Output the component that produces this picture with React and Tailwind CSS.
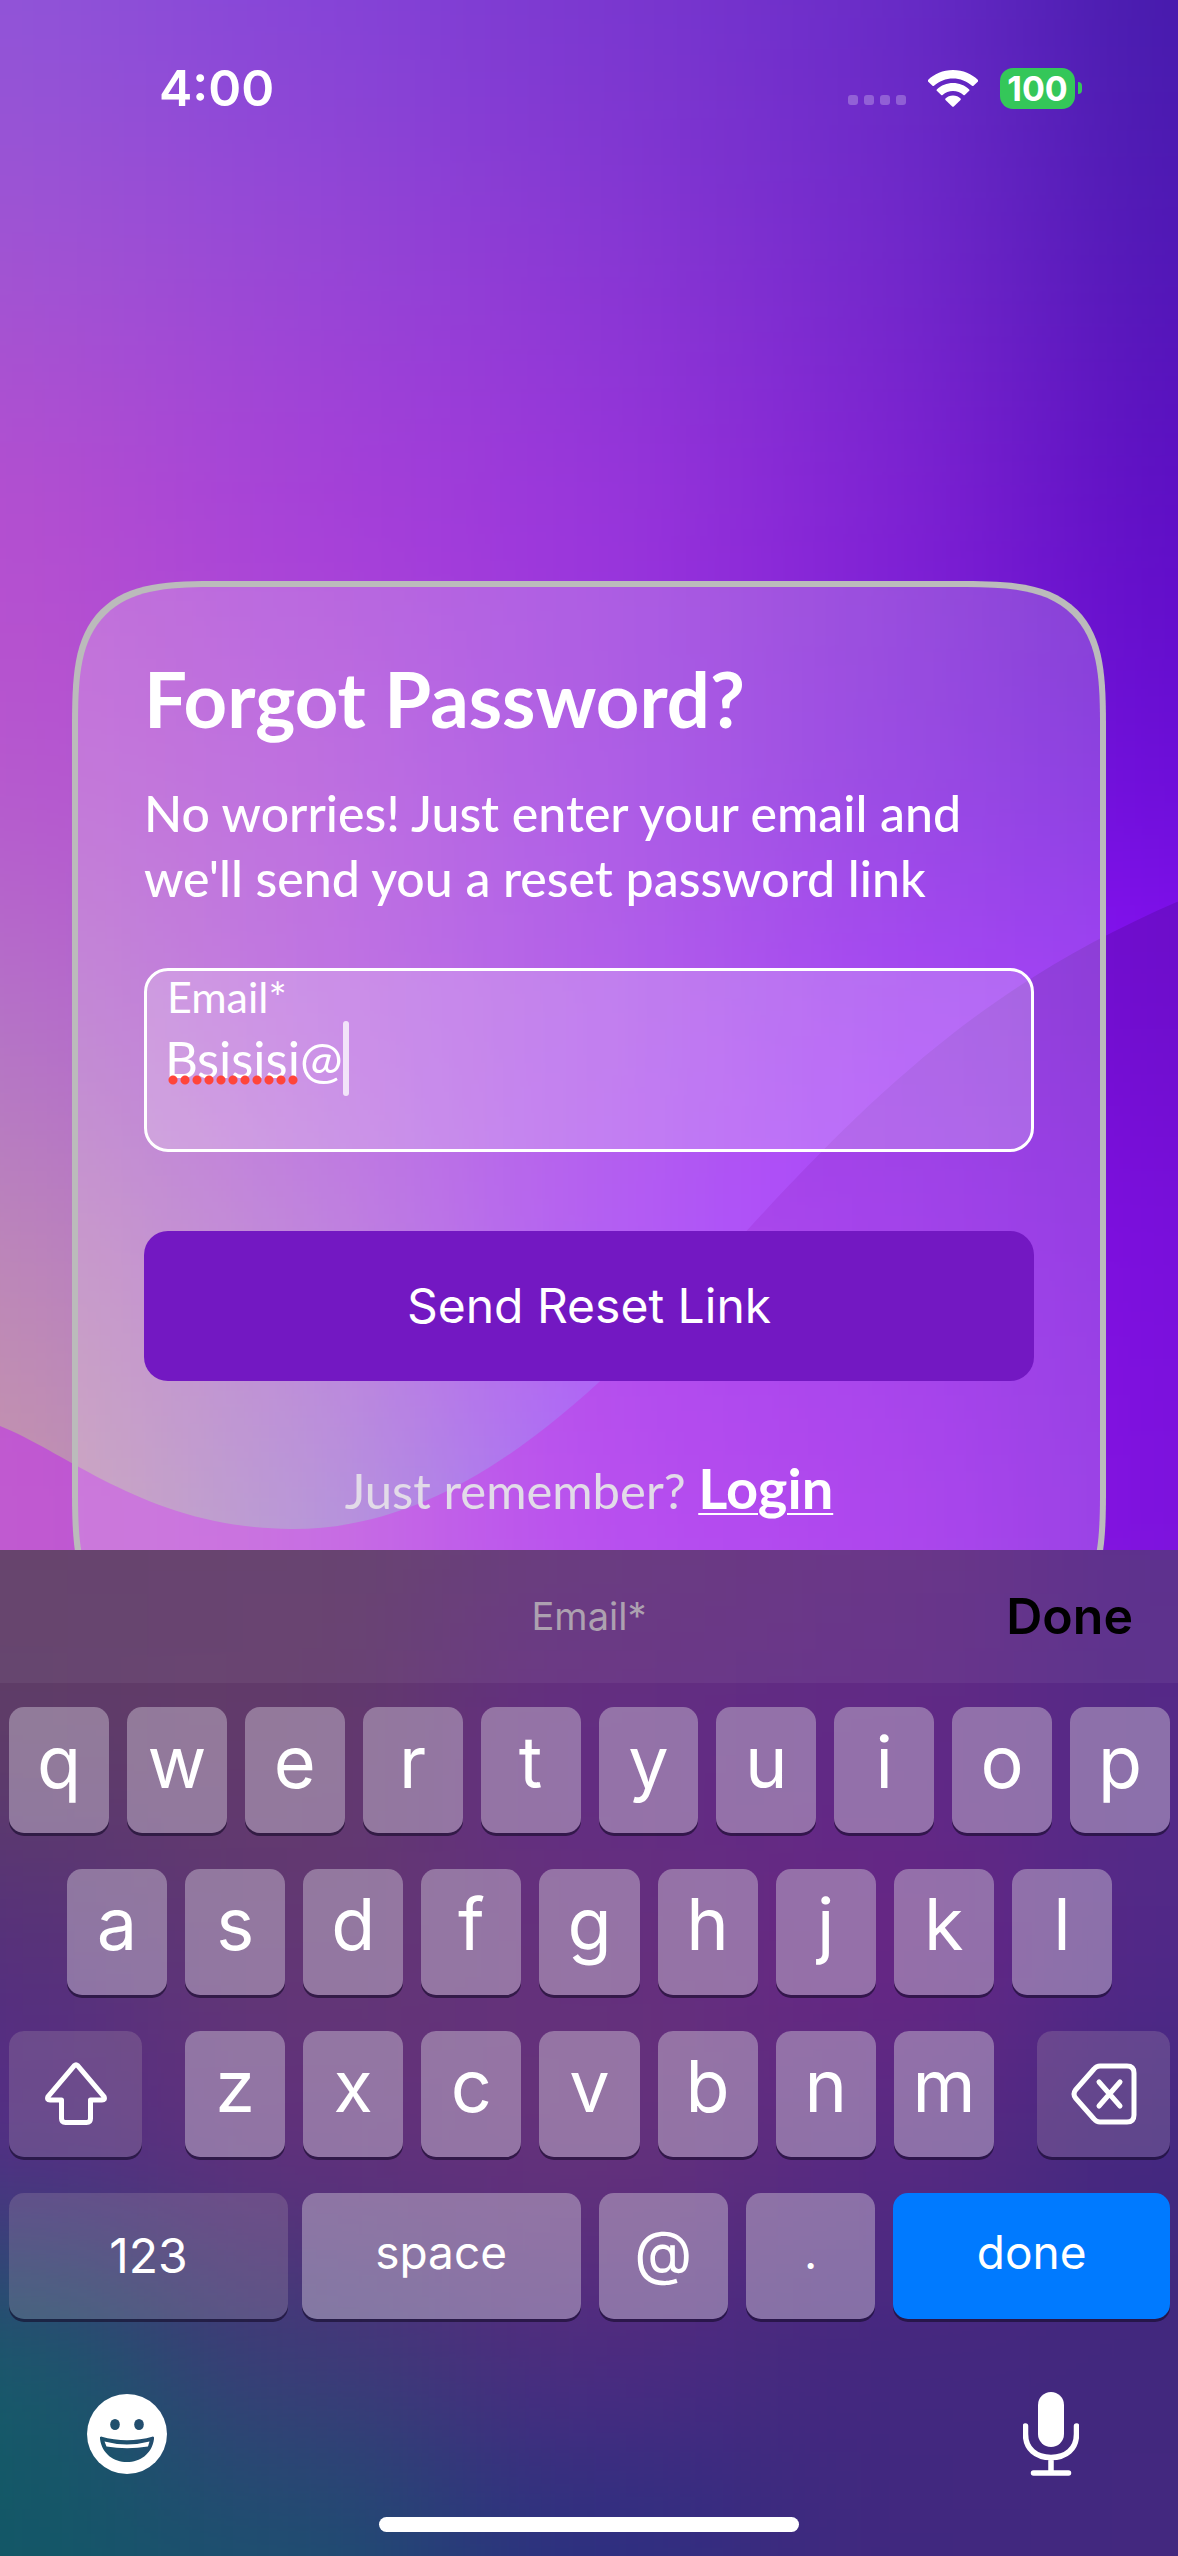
import React from "react";

const SKY = {
  xs: [0, 295, 589, 884, 1178],
  ys: [0, 260, 520, 780, 1040, 1300, 1560],
  colors: [
    ["#9055d8", "#8545d8", "#7a38d0", "#6a2cc8", "#431aaa"],
    ["#a155d2", "#9848d6", "#8a38d4", "#7429cc", "#4e16b4"],
    ["#b64fcf", "#a83fd8", "#9c36dc", "#8222d4", "#5c0cc4"],
    ["#b758ce", "#b14fd8", "#9c38e0", "#8020dc", "#6a0cd8"],
    ["#b478c4", "#b355dc", "#a23ae6", "#9418f4", "#8a10f8"],
    ["#bf8cb4", "#b270d0", "#a236f4", "#9718ff", "#9718ff"],
    ["#c898a8", "#a585cc", "#9050f8", "#9718ff", "#9718ff"],
  ],
};

const WAVE = {
  xs: [0, 295, 589, 884, 1178],
  ys: [960, 1250, 1540],
  colors: [
    ["#c055d0", "#c055dc", "#8a13dd", "#8213dc", "#6a0cc8"],
    ["#c055d0", "#b848e0", "#a020ea", "#8e14e8", "#780edc"],
    ["#c05ccf", "#be50da", "#a824ec", "#9c1aea", "#7a12dc"],
  ],
};

const BOARD = {
  xs: [0, 295, 589, 884, 1178],
  ys: [0, 200, 400, 600, 800, 1006],
  colors: [
    ["#5f3a65", "#603a68", "#623378", "#622c82", "#552588"],
    ["#5e3d68", "#623a6b", "#632c84", "#602986", "#542a86"],
    ["#55307c", "#623874", "#64307c", "#682684", "#502888"],
    ["#552c86", "#612f7c", "#66327a", "#582a82", "#42287f"],
    ["#175a6a", "#3d3a78", "#4e2a80", "#43287f", "#42287e"],
    ["#125766", "#1c4f70", "#2a3080", "#40287f", "#43287f"],
  ],
};

function Mesh({ mesh, blur }) {
  const { xs, ys, colors } = mesh;
  const edge = (list, i) => (i === 0 ? list[0] - 500 : (list[i - 1] + list[i]) / 2);
  const end = (list, i) =>
    i === list.length - 1 ? list[i] + 500 : (list[i] + list[i + 1]) / 2;
  return (
    <g filter={`url(#${blur})`}>
      {colors.map((row, r) =>
        row.map((color, c) => (
          <rect
            key={`${r}-${c}`}
            x={edge(xs, c)}
            y={edge(ys, r)}
            width={end(xs, c) - edge(xs, c) + 1}
            height={end(ys, r) - edge(ys, r) + 1}
            fill={color}
          />
        ))
      )}
    </g>
  );
}

function BlurFilter({ id, amount }) {
  return (
    <filter
      id={id}
      filterUnits="userSpaceOnUse"
      x="-500"
      y="-500"
      width="2200"
      height="2600"
      colorInterpolationFilters="sRGB"
    >
      <feGaussianBlur stdDeviation={amount} />
    </filter>
  );
}

function Wallpaper() {
  return (
    <svg
      aria-hidden="true"
      viewBox="0 0 1178 1551"
      preserveAspectRatio="none"
      className="absolute inset-0 h-full w-full"
    >
      <defs>
        <BlurFilter id="soft" amount="115" />
        <clipPath id="wave">
          <path d="M0 1427 C70 1455 150 1529 290 1530 C470 1532 610 1380 750 1228 C900 1064 1010 975 1178 902 V1600 H0 Z" />
        </clipPath>
      </defs>
      <Mesh mesh={SKY} blur="soft" />
      <g clipPath="url(#wave)">
        <Mesh mesh={WAVE} blur="soft" />
      </g>
    </svg>
  );
}

function StatusBar() {
  return (
    <header className="flex h-[176px] items-center justify-between pr-[96px] pl-[159px] font-[Inter,sans-serif]">
      <time className="text-[50px] leading-[60px] font-semibold">4:00</time>
      <div className="flex items-center">
        <div className="mt-6 flex gap-1.5">
          {[0, 1, 2, 3].map((i) => (
            <span key={i} className="size-2.5 rounded-[3px] bg-white/25" />
          ))}
        </div>
        <svg viewBox="0 0 50 37" className="ml-[22px] h-[37px] w-[50px]" fill="#fff" aria-label="Wi-Fi">
          <path d="M25 0 C35 0 44 4 50 10 Q50.500 10.700 50 11.400 L45.500 15.800 Q44.800 16.300 44 15.700 C39 11 32 8.400 25 8.400 C18 8.400 11 11 6 15.700 Q5.200 16.300 4.500 15.800 L0 11.400 Q-.5 10.700 0 10 C6 4 15 0 25 0 Z" />
          <path d="M25 13 C31 13 37 15.400 41.200 19.400 Q41.900 20.100 41.200 20.800 L36.800 25 Q36.100 25.500 35.400 24.900 C32.600 22.500 29 21.100 25 21.100 C21 21.100 17.400 22.500 14.600 24.900 Q13.900 25.500 13.200 25 L8.800 20.800 Q8.100 20.100 8.800 19.400 C13 15.400 19 13 25 13 Z" />
          <path d="M25 25.600 C28 25.600 30.600 26.700 32.500 28.500 Q33.100 29.200 32.500 29.900 L25.800 36.500 Q25 37.100 24.200 36.500 L17.500 29.900 Q16.900 29.200 17.500 28.500 C19.400 26.700 22 25.600 25 25.600 Z" />
        </svg>
        <div className="ml-[22px] flex h-[41px] w-[75px] items-center justify-center rounded-[13px] bg-[#34c759] text-[34px] leading-[41px] font-bold">
          100
        </div>
        <span className="ml-[3px] h-3 w-1 rounded-r-full bg-[#34c759]" />
      </div>
    </header>
  );
}

function ForgotPasswordCard() {
  return (
    <section className="mx-[72px] mt-[405px] h-[1056px] shrink-0 rounded-[110px] border-[6px] border-[#bbbbbb] bg-white/20 px-[66px] pt-16 font-[Lato,sans-serif] supports-[corner-shape:squircle]:rounded-[150px] supports-[corner-shape:squircle]:[corner-shape:superellipse(1.7)]">
      <h1 className="text-[76px] leading-[96px] font-bold">Forgot Password?</h1>
      <p className="mt-[34px] text-[50px] leading-[65px] font-medium">
        No worries! Just enter your email and
        <br />
        we'll send you a reset password link
      </p>
      <form onSubmit={(e) => e.preventDefault()}>
        <div className="mt-[57px] flex h-[184px] flex-col rounded-3xl border-[3px] border-white bg-white/20 px-[18px] pt-0.5">
          <label htmlFor="email" className="pl-0.5 text-[43px] leading-[48px]">
            Email*
          </label>
          <div className="relative flex">
            <input
              id="email"
              type="text"
              defaultValue="Bsisisi@"
              spellCheck={false}
              className="field-sizing-content h-[75px] bg-transparent text-[51px] leading-[75px] font-normal outline-none"
            />
            <span className="h-[75px] w-1.5 rounded-sm bg-white/75" />
            <span className="absolute top-[53px] left-0.5 h-3 w-[132px] bg-[radial-gradient(circle,#ff453a_4px,transparent_5px)] bg-size-[12px_12px]" />
          </div>
        </div>
        <button
          type="submit"
          className="mt-[79px] h-[150px] w-full rounded-3xl bg-[#7318c2] font-[Inter,sans-serif] text-[48px]"
        >
          Send Reset Link
        </button>
      </form>
      <p className="mt-[74px] text-center text-[49px] leading-[66px] text-[#e2dbe8]">
        Just remember?{" "}
        <a href="#login" className="text-[56px] font-bold text-white underline decoration-2 underline-offset-4">
          Login
        </a>
      </p>
    </section>
  );
}

function LetterKey({ children }) {
  return (
    <button
      type="button"
      className="flex h-[126px] min-w-0 flex-1 items-center justify-center rounded-[15px] bg-[#d0c8d8]/45 pb-4 text-[72px] leading-[90px] font-normal shadow-[0_3px_0_rgba(20,10,40,0.6)]"
    >
      {children}
    </button>
  );
}

function ShiftIcon() {
  return (
    <svg viewBox="0 0 64 64" className="size-16" fill="none" stroke="#fff" strokeWidth="5" strokeLinejoin="round" aria-hidden="true">
      <path d="M30.300 3.600 Q32 2 33.700 3.600 L60 34.600 Q61.500 38 58 38 H46.500 V56.500 Q46.500 60.500 42.500 60.500 H21.500 Q17.500 60.500 17.500 56.500 V38 H6 Q2.500 38 4 34.600 Z" />
    </svg>
  );
}

function DeleteIcon() {
  return (
    <svg viewBox="0 0 66 62" className="h-[62px] w-[66px]" fill="none" stroke="#fff" strokeWidth="5" strokeLinecap="round" strokeLinejoin="round" aria-hidden="true">
      <path d="M29 3 H56 Q63 3 63 10 V52 Q63 59 56 59 H29 Q25.500 59 23 56 L4.500 35 Q1.500 31 4.500 27 L23 6 Q25.500 3 29 3 Z" />
      <path d="M28 19 L49 43 M49 19 L28 43" />
    </svg>
  );
}

function EmojiIcon() {
  return (
    <svg viewBox="0 0 80 80" className="size-20" aria-hidden="true">
      <defs>
        <mask id="face">
          <rect width="80" height="80" fill="#fff" />
          <ellipse cx="28" cy="30.500" rx="4.800" ry="5.600" fill="#000" />
          <ellipse cx="52" cy="30.500" rx="4.800" ry="5.600" fill="#000" />
          <path d="M14 42.500 Q40 50 66 42.500 Q67.500 42.500 67 45 C65 60 53 68 40 68 C27 68 15 60 13 45 Q12.500 42.500 14 42.500 Z" fill="#000" />
          <path d="M17.500 47.500 Q40 53.500 62.500 47.500 L61 52.500 Q40 56 19.500 52.500 Z" fill="#fff" />
        </mask>
      </defs>
      <circle cx="40" cy="40" r="40" fill="#fff" mask="url(#face)" />
    </svg>
  );
}

function MicIcon() {
  return (
    <svg viewBox="0 0 56 86" className="h-[86px] w-14" aria-hidden="true">
      <rect x="15" y="1" width="26" height="55" rx="13" fill="#fff" />
      <path d="M2.500 35 V43 C2.500 58 13 66.500 28 66.500 C43 66.500 53.500 58 53.500 43 V35 M28 67 V81 M10.500 82 H45.500" fill="none" stroke="#fff" strokeWidth="5.500" strokeLinecap="round" />
    </svg>
  );
}

function Keyboard() {
  return (
    <section aria-label="Keyboard" className="relative shrink-0 overflow-hidden font-[Inter,sans-serif]">
      <svg aria-hidden="true" viewBox="0 0 1178 1006" preserveAspectRatio="none" className="absolute inset-0 h-full w-full">
        <defs>
          <BlurFilter id="haze" amount="85" />
        </defs>
        <Mesh mesh={BOARD} blur="haze" />
      </svg>
      <div className="relative">
        <div className="grid h-[133px] grid-cols-3 items-center bg-white/5 px-[45px]">
          <span />
          <span className="text-center text-[38px] text-[#ada1b0]">Email*</span>
          <button type="button" className="justify-self-end text-[50px] font-semibold text-black">
            Done
          </button>
        </div>
        <div className="flex flex-col gap-9 pt-6 pr-2 pl-[9px]">
          <div className="flex gap-[18px]">
            {[..."qwertyuiop"].map((k) => <LetterKey key={k}>{k}</LetterKey>)}
          </div>
          <div className="flex gap-[18px] px-[58px]">
            {[..."asdfghjkl"].map((k) => <LetterKey key={k}>{k}</LetterKey>)}
          </div>
          <div className="flex gap-[43px]">
            <button type="button" aria-label="Shift" className="flex h-[126px] w-[133px] items-center justify-center rounded-[15px] bg-[#b0a0b0]/25 shadow-[0_3px_0_rgba(20,10,40,0.6)]">
              <ShiftIcon />
            </button>
            <div className="flex flex-1 gap-[18px]">
              {[..."zxcvbnm"].map((k) => <LetterKey key={k}>{k}</LetterKey>)}
            </div>
            <button type="button" aria-label="Delete" className="flex h-[126px] w-[133px] items-center justify-center rounded-[15px] bg-[#b0a0b0]/25 shadow-[0_3px_0_rgba(20,10,40,0.6)]">
              <DeleteIcon />
            </button>
          </div>
          <div className="grid grid-cols-2 gap-[18px] text-[46px]">
            <div className="grid grid-cols-2 gap-3.5">
              <button type="button" className="h-[126px] rounded-[15px] bg-[#b0a0b0]/25 text-[48px] shadow-[0_3px_0_rgba(20,10,40,0.6)]">123</button>
              <button type="button" className="h-[126px] rounded-[15px] bg-[#d0c8d8]/45 pb-2 shadow-[0_3px_0_rgba(20,10,40,0.6)]">space</button>
            </div>
            <div className="grid grid-cols-[129fr_129fr_276fr] gap-[18px]">
              <button type="button" className="h-[126px] rounded-[15px] bg-[#d0c8d8]/45 pb-2 text-[60px] shadow-[0_3px_0_rgba(20,10,40,0.6)]">@</button>
              <button type="button" className="h-[126px] rounded-[15px] bg-[#d0c8d8]/45 pb-2 shadow-[0_3px_0_rgba(20,10,40,0.6)]">.</button>
              <button type="button" className="h-[126px] rounded-[15px] bg-[#007aff] pb-2 shadow-[0_3px_0_rgba(20,10,40,0.6)]">done</button>
            </div>
          </div>
        </div>
        <div className="flex h-[198px] items-center justify-between pt-8 pr-[99px] pl-[87px]">
          <button type="button" aria-label="Emoji"><EmojiIcon /></button>
          <button type="button" aria-label="Dictate"><MicIcon /></button>
        </div>
        <div className="mx-auto mb-6 h-[15px] w-[420px] rounded-full bg-white" />
      </div>
    </section>
  );
}

export default function App() {
  return (
    <div className="flex h-screen flex-col overflow-hidden bg-[#43287f] text-white antialiased">
      <main className="relative min-h-0 flex-1 overflow-hidden">
        <Wallpaper />
        <div className="relative flex flex-col">
          <StatusBar />
          <ForgotPasswordCard />
        </div>
      </main>
      <Keyboard />
    </div>
  );
}
